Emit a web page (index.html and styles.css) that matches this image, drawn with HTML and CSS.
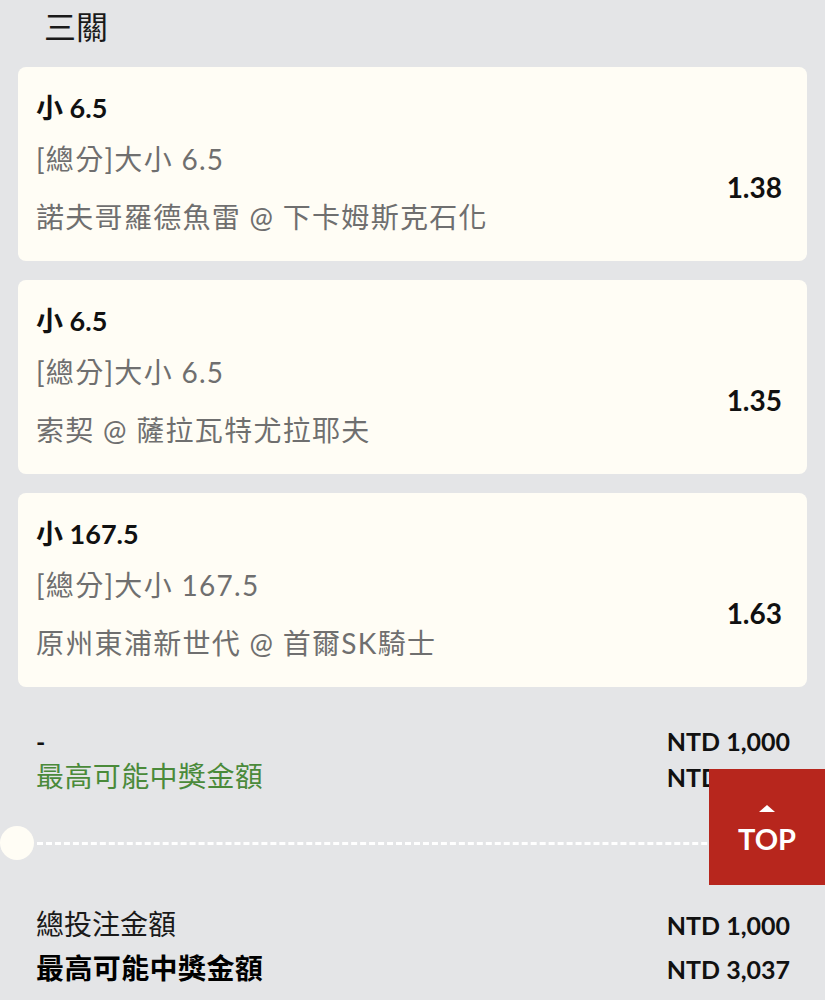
FILE: index.html
```html
<!DOCTYPE html>
<html lang="zh-Hant">
<head>
  <meta charset="UTF-8" />
  <meta name="viewport" content="width=device-width, initial-scale=1.0"/>
  <title>三關 投注單</title>
  <link rel="stylesheet" href="styles.css">
</head>
<body>
  <h1 class="title">三關</h1>

  <div class="bets">
    <div class="bet">
      <div class="bet-pick">小 6.5</div>
      <div class="bet-row">
        <div class="bet-info">
          <div class="bet-line">[總分]大小 6.5</div>
          <div class="bet-line">諾夫哥羅德魚雷 @ 下卡姆斯克石化</div>
        </div>
        <div class="bet-odds">1.38</div>
      </div>
    </div>

    <div class="bet">
      <div class="bet-pick">小 6.5</div>
      <div class="bet-row">
        <div class="bet-info">
          <div class="bet-line">[總分]大小 6.5</div>
          <div class="bet-line">索契 @ 薩拉瓦特尤拉耶夫</div>
        </div>
        <div class="bet-odds">1.35</div>
      </div>
    </div>

    <div class="bet">
      <div class="bet-pick">小 167.5</div>
      <div class="bet-row">
        <div class="bet-info">
          <div class="bet-line">[總分]大小 167.5</div>
          <div class="bet-line">原州東浦新世代 @ 首爾SK騎士</div>
        </div>
        <div class="bet-odds">1.63</div>
      </div>
    </div>
  </div>

  <div class="summary">
    <div class="sum-row">
      <span class="dash">-</span>
      <span class="amount">NTD 1,000</span>
    </div>
    <div class="sum-row">
      <span class="win-label">最高可能中獎金額</span>
      <span class="amount">NTD 3,037</span>
    </div>
  </div>

  <div class="ticket-cut">
    <span class="notch"></span>
    <span class="cut-line"></span>
    <span class="notch"></span>
  </div>

  <div class="totals">
    <div class="total-row">
      <span class="total-label">總投注金額</span>
      <span class="amount">NTD 1,000</span>
    </div>
    <div class="total-row">
      <span class="total-label strong">最高可能中獎金額</span>
      <span class="amount">NTD 3,037</span>
    </div>
  </div>

  <button class="top-btn" onclick="window.scrollTo(0, 0)">
    <span class="top-arrow"></span>
    TOP
  </button>
</body>
</html>
```

FILE: styles.css
```css
body {
  font-family: 'Lato', 'Noto Sans CJK TC', sans-serif;
  margin: 0;
  background: #e4e5e7;
  color: #111;
}
.title {
  font-size: 32px;
  font-weight: 400;
  line-height: 40px;
  margin: 7px 0 0;
  padding-left: 44px;
  color: #1a1a1a;
}
.bets {
  display: flex;
  flex-direction: column;
  gap: 19px;
  padding: 0 18px;
  margin-top: 20px;
}
.bet {
  background: #fffdf5;
  border-radius: 8px;
  padding: 23px 25px 15px 18px;
}
.bet-pick {
  font-size: 27px;
  font-weight: 700;
  line-height: 36px;
}
.bet-row {
  display: flex;
  align-items: center;
  justify-content: space-between;
  margin-top: 4px;
}
.bet-line {
  font-size: 28px;
  line-height: 58px;
  color: #6f6f6f;
  letter-spacing: 1.3px;
}
.bet-odds {
  font-size: 28px;
  font-weight: 700;
  padding-bottom: 3px;
}
.summary, .totals {
  padding: 0 35px 0 36px;
}
.summary {
  margin-top: 37px;
}
.sum-row, .total-row {
  display: flex;
  justify-content: space-between;
  align-items: baseline;
  line-height: 35px;
}
.total-row {
  line-height: 43px;
}
.dash {
  font-size: 25px;
  font-weight: 700;
}
.win-label {
  font-size: 28px;
  letter-spacing: 0.4px;
  color: #4a8a3a;
}
.amount {
  font-size: 25px;
  font-weight: 700;
}
.ticket-cut {
  display: flex;
  align-items: center;
  margin-top: 31px;
}
.notch {
  width: 34px;
  height: 34px;
  border-radius: 50%;
  background: #fffdf5;
  flex: none;
}
.cut-line {
  flex: 1;
  margin: 0 3px;
  border-top: 3px dashed #fff;
}
.totals {
  margin-top: 43px;
}
.total-label {
  font-size: 28px;
  color: #1a1a1a;
}
.total-label.strong {
  font-weight: 700;
  letter-spacing: 0.4px;
  color: #000;
}
.top-btn {
  position: fixed;
  right: 0;
  top: 769px;
  width: 116px;
  height: 116px;
  background: #b7261d;
  color: #fff;
  border: none;
  font-family: 'Lato', sans-serif;
  font-size: 29px;
  font-weight: 700;
  display: flex;
  flex-direction: column;
  align-items: center;
  justify-content: center;
  gap: 9px;
  padding: 7px 0 0;
  cursor: pointer;
}
.top-arrow {
  width: 0;
  height: 0;
  border-left: 8px solid transparent;
  border-right: 8px solid transparent;
  border-bottom: 7px solid #fff;
}
```
